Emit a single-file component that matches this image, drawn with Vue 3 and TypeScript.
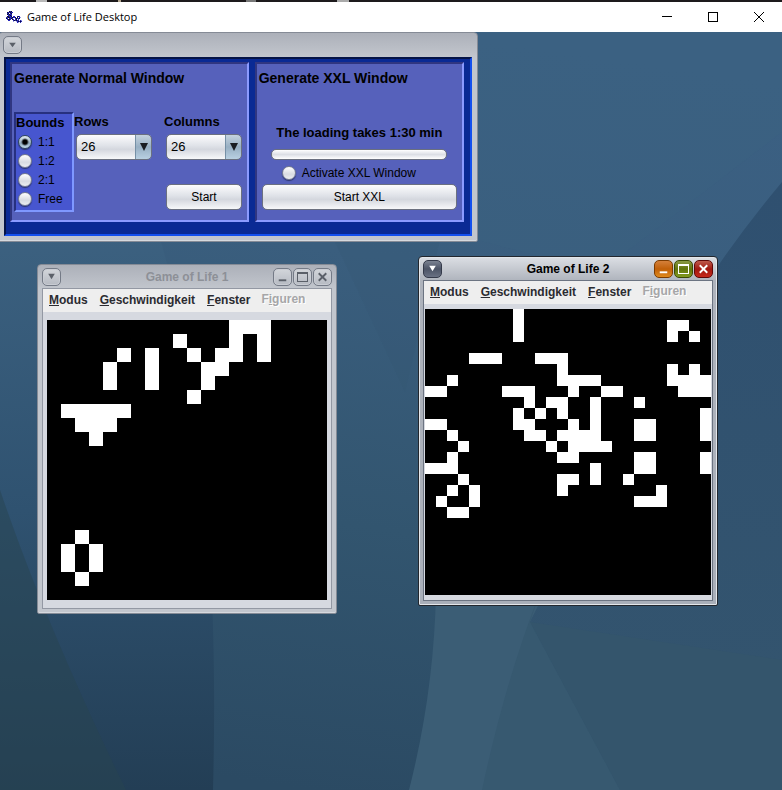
<script setup lang="ts">
import { ref } from 'vue'

interface LifeWindow {
  id: string
  title: string
  active: boolean
  size: number
  cell: number
  rows: Record<number, number[]>
}

interface MenuEntry {
  key: string
  before: string
  after: string
  disabled: boolean
}

const bounds = ['1:1', '1:2', '2:1', 'Free']
const bound = ref('1:1')
const rows = ref(26)
const columns = ref(26)
const sizes = [10, 20, 26, 30, 40]
const xxl = ref(false)

const menus: MenuEntry[] = [
  { key: 'M', before: '', after: 'odus', disabled: false },
  { key: 'G', before: '', after: 'eschwindigkeit', disabled: false },
  { key: 'F', before: '', after: 'enster', disabled: false },
  { key: 'i', before: 'F', after: 'guren', disabled: true },
]

const windows: LifeWindow[] = [
  {
    id: 'one',
    title: 'Game of Life 1',
    active: false,
    size: 20,
    cell: 14,
    rows: {
      0: [13, 14, 15],
      1: [9, 13, 15],
      2: [5, 7, 10, 12, 13, 15],
      3: [4, 7, 11, 12],
      4: [4, 7, 11],
      5: [10],
      6: [1, 2, 3, 4, 5],
      7: [2, 3, 4],
      8: [3],
      15: [2],
      16: [1, 3],
      17: [1, 3],
      18: [2],
    },
  },
  {
    id: 'two',
    title: 'Game of Life 2',
    active: true,
    size: 26,
    cell: 11,
    rows: {
      0: [8],
      1: [8, 22, 23],
      2: [8, 22, 24],
      4: [4, 5, 6, 10, 11, 12],
      5: [12, 22, 24],
      6: [2, 12, 13, 14, 15, 22, 23, 24, 25],
      7: [0, 1, 7, 8, 9, 13, 16, 17, 23, 24, 25],
      8: [9, 11, 12, 15, 19],
      9: [8, 10, 12, 15, 25],
      10: [0, 1, 8, 9, 13, 15, 19, 20, 25],
      11: [2, 9, 10, 12, 13, 14, 15, 19, 20, 25],
      12: [3, 11, 13, 14, 15, 16],
      13: [2, 12, 13, 19, 20, 25],
      14: [0, 1, 2, 15, 19, 20, 25],
      15: [3, 12, 13, 15, 18],
      16: [2, 4, 12, 21],
      17: [1, 4, 19, 20, 21],
      18: [2, 3],
    },
  },
]

function cells(w: LifeWindow): { x: number; y: number }[] {
  return Object.entries(w.rows).flatMap(([y, xs]) => xs.map((x) => ({ x, y: Number(y) })))
}

// Pixel pattern of the application icon: k = black, b = blue, l = light blue
const iconPattern = [
  '...kbk..........',
  '.kbbkbb.........',
  '.bk.bk..........',
  '.kbkbb..........',
  '..bbkb..........',
  '.kkbbk.bb..bkb..',
  'bbkkbbkbbk.k.bl.',
  'kb.bbkb..bkbbk..',
  '.bkkb.kb.bk.b...',
  '..bb...bkbkbb.bl',
  '.......l..lbkbkb',
  '...........bl.b.',
]
const iconColors: Record<string, string> = { k: '#101030', b: '#2424b8', l: '#9a9ae0' }
const iconPixels = iconPattern.flatMap((line, y) =>
  [...line].map((c, x) => ({ x, y, c })).filter((p) => p.c !== '.'),
)
</script>

<template>
  <div class="screen">
    <div class="strip"></div>
    <header class="os-bar">
      <svg class="app-icon" viewBox="0 0 16 12" shape-rendering="crispEdges" aria-hidden="true">
        <rect v-for="(p, i) in iconPixels" :key="i" :x="p.x" :y="p.y" width="1" height="1" :fill="iconColors[p.c]" />
      </svg>
      <h1>Game of Life Desktop</h1>
      <div class="os-buttons">
        <button type="button" aria-label="Minimize">
          <svg viewBox="0 0 10 10" shape-rendering="crispEdges"><path d="M0 4.5H10" /></svg>
        </button>
        <button type="button" aria-label="Maximize">
          <svg viewBox="0 0 10 10" shape-rendering="crispEdges"><path d="M.5 .5H9.5V9.5H.5Z" /></svg>
        </button>
        <button type="button" aria-label="Close">
          <svg viewBox="0 0 10 10"><path d="M0 0L10 10M10 0L0 10" /></svg>
        </button>
      </div>
    </header>

    <main class="desktop">
      <svg class="wallpaper" viewBox="0 0 782 758" preserveAspectRatio="xMidYMid slice" aria-hidden="true">
        <defs>
          <linearGradient id="sky" x1="0.55" y1="0" x2="0.4" y2="1">
            <stop offset="0" stop-color="#3b6083" />
            <stop offset="0.3" stop-color="#3a5e7e" />
            <stop offset="0.65" stop-color="#32556f" />
            <stop offset="1" stop-color="#2b4a63" />
          </linearGradient>
          <linearGradient id="deep" x1="0" y1="0" x2="0" y2="1">
            <stop offset="0" stop-color="#3c6180" />
            <stop offset="0.5" stop-color="#2f5270" />
            <stop offset="1" stop-color="#233e55" />
          </linearGradient>
          <linearGradient id="right" x1="0" y1="0" x2="0" y2="1">
            <stop offset="0" stop-color="#2f5070" />
            <stop offset="1" stop-color="#34556e" />
          </linearGradient>
        </defs>
        <rect width="782" height="758" fill="url(#sky)" />
        <path d="M0 200H158Q222 410 213 758H0Z" fill="url(#deep)" />
        <path d="M0 458Q46 594 126 758H0Z" fill="#274450" fill-opacity=".5" />
        <path d="M334 208L405 360L440 208Z" fill="#31536f" fill-opacity=".12" />
        <path d="M782 150Q690 260 640 370L530 590L620 758H782Z" fill="url(#right)" />
        <path d="M436 560Q434 660 409 758H620L530 590L545 560Z" fill="#3b5d75" />
        <path d="M540 560Q505 650 482 758H620L530 590Z" fill="#375970" />
        <path d="M530 590L782 628V758H620Z" fill="#34556c" />
        <path d="M478 208L600 240L782 100V0H478Z" fill="#3d6282" fill-opacity=".3" />
      </svg>

      <section class="frame frame-main" aria-label="Generator">
        <div class="frame-title">
          <button type="button" class="knob" aria-label="Window menu">
            <svg viewBox="0 0 17 17"><path class="solid" d="M5 6H12L8.5 11Z" /></svg>
          </button>
        </div>
        <div class="generator">
          <section class="panel panel-normal">
            <h2>Generate Normal Window</h2>
            <div class="normal-form">
              <fieldset class="bounds">
                <legend>Bounds</legend>
                <label v-for="b in bounds" :key="b">
                  <input v-model="bound" type="radio" name="bounds" :value="b" />
                  <span>{{ b }}</span>
                </label>
              </fieldset>
              <div class="field">
                <label for="rows">Rows</label>
                <div class="combo">
                  <select id="rows" v-model="rows">
                    <option v-for="s in sizes" :key="s" :value="s">{{ s }}</option>
                  </select>
                  <svg viewBox="0 0 8 8" aria-hidden="true"><path d="M0 0H8L4 8Z" /></svg>
                </div>
              </div>
              <div class="field">
                <label for="columns">Columns</label>
                <div class="combo">
                  <select id="columns" v-model="columns">
                    <option v-for="s in sizes" :key="s" :value="s">{{ s }}</option>
                  </select>
                  <svg viewBox="0 0 8 8" aria-hidden="true"><path d="M0 0H8L4 8Z" /></svg>
                </div>
                <button type="button" class="push">Start</button>
              </div>
            </div>
          </section>
          <section class="panel panel-xxl">
            <h2>Generate XXL Window</h2>
            <div class="xxl-form">
              <strong>The loading takes 1:30 min</strong>
              <div class="progress" role="progressbar" aria-label="Loading" aria-valuenow="0"></div>
              <label class="activate">
                <input v-model="xxl" type="checkbox" />
                <span>Activate XXL Window</span>
              </label>
              <button type="button" class="push">Start XXL</button>
            </div>
          </section>
        </div>
      </section>

      <section
        v-for="w in windows"
        :key="w.id"
        class="frame"
        :class="[`frame-${w.id}`, { active: w.active }]"
        :aria-label="w.title"
      >
        <div class="frame-title">
          <button type="button" class="knob" aria-label="Window menu">
            <svg viewBox="0 0 17 17"><path class="solid" d="M5 5H12L8.5 11Z" /></svg>
          </button>
          <h2>{{ w.title }}</h2>
          <div class="knobs">
            <button type="button" class="knob min" aria-label="Minimize">
              <svg viewBox="0 0 17 17"><path d="M4.5 12H12.5" /></svg>
            </button>
            <button type="button" class="knob max" aria-label="Maximize">
              <svg viewBox="0 0 17 16" shape-rendering="crispEdges">
                <path class="thin" d="M3.5 3.5H13.5V12.5H3.5ZM3 4.5H14" />
              </svg>
            </button>
            <button type="button" class="knob close" aria-label="Close">
              <svg viewBox="0 0 17 17"><path d="M4.500 4.500L12.500 12.500M12.500 4.500L4.500 12.500" /></svg>
            </button>
          </div>
        </div>
        <div class="frame-body">
          <nav class="menubar" :aria-label="`${w.title} menu`">
            <button v-for="m in menus" :key="m.key + m.after" type="button" :disabled="m.disabled">
              {{ m.before }}<u>{{ m.key }}</u>{{ m.after }}
            </button>
          </nav>
          <div class="board">
            <svg
              :viewBox="`0 0 ${w.size} ${w.size}`"
              :width="w.size * w.cell"
              :height="w.size * w.cell"
              shape-rendering="crispEdges"
              role="img"
              :aria-label="`${w.title} board`"
            >
              <rect :width="w.size" :height="w.size" fill="#000" />
              <rect v-for="c in cells(w)" :key="`${c.x}-${c.y}`" :x="c.x" :y="c.y" width="1" height="1" fill="#fff" />
            </svg>
          </div>
        </div>
      </section>
    </main>
  </div>
</template>

<style>
body {
  margin: 0;
}
</style>

<style scoped>
.screen {
  display: flex;
  flex-direction: column;
  min-height: 100vh;
  overflow: hidden;
  font: 12px/16px 'Liberation Sans', Arial, sans-serif;
  color: #000;
}

.screen * {
  box-sizing: border-box;
}

button,
select {
  margin: 0;
  padding: 0;
  font: inherit;
  color: inherit;
}

h1,
h2 {
  margin: 0;
}

.strip {
  height: 2px;
  background: linear-gradient(90deg, #1d1a1c 36px, #b8b8b8 36px 47px, #1d1a1c 47px 118px, #b5a890 118px 121px, #1d1a1c 121px 246px, #777 246px 256px, #1d1a1c 256px 337px, #aaa 337px 349px, #1d1a1c 349px);
}

.os-bar {
  display: flex;
  align-items: center;
  height: 30px;
  padding-left: 6px;
  background: #fff;
}

.app-icon {
  width: 16px;
  height: 12px;
  margin-right: 5px;
}

.os-bar h1 {
  font: 11px/16px 'Open Sans', 'Noto Sans', sans-serif;
}

.os-buttons {
  display: flex;
  margin-left: auto;
}

.os-buttons button {
  display: flex;
  align-items: center;
  justify-content: center;
  width: 46px;
  height: 28px;
  border: 0;
  background: none;
}

.os-buttons svg {
  width: 10px;
  height: 10px;
  overflow: visible;
  fill: none;
  stroke: #000;
}

.desktop {
  position: relative;
  flex: 1;
  overflow: hidden;
  background: #34556f;
}

.wallpaper {
  position: absolute;
  inset: 0;
  width: 100%;
  height: 100%;
}

/* Internal frames, placed freely on the desktop */
.frame {
  position: absolute;
  display: flex;
  flex-direction: column;
  padding: 0 4px 4px;
  border: 1px solid #858b96;
  border-radius: 4px 4px 2px 2px;
  background: linear-gradient(#acb0b9, #c2c6cd 24px, #c2c6cd);
  box-shadow: inset 0 -1px #d6d9de;
}

.frame-main {
  top: 0;
  left: -2px;
  width: 480px;
}

.frame-one {
  top: 232px;
  left: 37px;
  width: 300px;
  height: 350px;
}

.frame-two {
  top: 224px;
  left: 418px;
  width: 300px;
  height: 350px;
}

.frame.active {
  border-color: #22272e;
  background: linear-gradient(#dcdfe4, #aeb3bc 24px, #a9afb9);
  box-shadow: inset 0 0 0 1px #e3e6ea;
}

.frame-title {
  display: grid;
  grid-template-columns: 60px 1fr 60px;
  align-items: center;
  height: 23px;
}

.frame-title h2 {
  font-size: 12px;
  line-height: 16px;
  text-align: center;
  color: #8d9097;
}

.active .frame-title h2 {
  color: #000;
}

.knobs {
  display: flex;
  justify-content: flex-end;
  gap: 1px;
}

.knob {
  width: 19px;
  height: 18px;
  border: 1px solid #747a86;
  border-radius: 5px;
  background: linear-gradient(#d3d6db, #b6bac2);
  box-shadow: inset 0 0 0 1px #c9ccd3;
  color: #5b6069;
}

.knob svg {
  display: block;
  width: 17px;
  height: 16px;
  fill: none;
  stroke: currentColor;
  stroke-width: 2;
}

.knob .solid {
  fill: currentColor;
  stroke: none;
}

.knob .thin {
  stroke-width: 1;
}

.active .knob {
  border-color: #343a4a;
  background: linear-gradient(#7b8291, #4c5466 50%, #697183);
  box-shadow: none;
  color: #fff;
}

.active .knob.min {
  border-color: #7c3c00;
  background: linear-gradient(#d4803a, #c06009 50%, #e08a1c);
}

.active .knob.max {
  border-color: #3b4a05;
  background: linear-gradient(#8b9a45, #60740c 50%, #839b1f);
}

.active .knob.close {
  border-color: #5e0808;
  background: linear-gradient(#bf5a4c, #a01810 50%, #c6281b);
}

.frame-body {
  display: flex;
  flex: 1;
  flex-direction: column;
  border: 1px solid #9398a3;
  background: #d6d9e0;
}

.active .frame-body {
  border-color: #6c7482;
}

.menubar {
  display: flex;
  height: 23px;
  background: #eee;
}

.menubar button {
  height: 22px;
  padding: 0 6px;
  border: 0;
  background: none;
  font-weight: bold;
  color: #2b2b30;
}

.menubar button:disabled {
  height: 20px;
  padding: 0 5px;
  color: #a6a6a8;
  text-shadow: 1px 1px #fff;
}

.board {
  display: flex;
  flex: 1;
  align-items: center;
  justify-content: center;
}

.board svg {
  display: block;
}

/* Generator controls */
.generator {
  display: flex;
  gap: 6px;
  margin: 1px;
  padding: 3px 6px 12px 4px;
  border: 2px solid;
  border-color: #051447 #1450ee #1450ee #051447;
  background: #0a2a94;
}

.panel {
  display: flex;
  flex-direction: column;
  min-width: 0;
  border: 2px solid;
  border-color: #303681 #8b9bff #8b9bff #303681;
  background: #5661bb;
}

.panel-normal {
  flex: 240;
}

.panel-xxl {
  flex: 210;
}

.panel h2 {
  padding: 6px 2px 4px;
  font-size: 14px;
  line-height: 16px;
}

.normal-form {
  display: grid;
  grid-template-columns: 60px 90px 1fr;
  flex: 1;
  padding: 22px 0 8px 2px;
}

.bounds {
  display: flex;
  flex-direction: column;
  min-width: 0;
  margin: 0;
  padding: 0 0 2px;
  border: 2px solid;
  border-color: #273080 #7f98ff #7f98ff #273080;
  background: #4756cf;
}

.bounds legend {
  float: left;
  padding: 0;
  font-size: 13px;
  font-weight: bold;
  line-height: 18px;
}

.bounds label {
  display: flex;
  align-items: center;
  gap: 6px;
  height: 19px;
  padding-left: 2px;
}

.bounds input,
.activate input {
  width: 14px;
  height: 14px;
  margin: 0;
  border: 1px solid #777d90;
  border-radius: 50%;
  appearance: none;
  background: linear-gradient(#fff, #d8dbe2 60%, #eceef2);
  box-shadow: 0 1px 1px #2c346e;
}

.bounds input:checked {
  border-color: #31475e;
  background: radial-gradient(circle, #000 2px, transparent 4px), linear-gradient(#e6edf3, #8fa9bd 60%, #c3dbea);
}

.field {
  display: flex;
  flex-direction: column;
  align-items: flex-start;
}

.field label {
  font-size: 13px;
  font-weight: bold;
  line-height: 20px;
}

.combo {
  position: relative;
  margin: 2px 0 24px 2px;
}

.combo select,
.push {
  display: block;
  width: 76px;
  height: 26px;
  border: 1px solid #6b7080;
  border-radius: 5px;
  background: linear-gradient(#fcfcfd, #dfe2e8 45%, #d4d7de 60%, #f7f8fa);
}

.combo select {
  padding-left: 4px;
  font-size: 13px;
  appearance: none;
  background:
    linear-gradient(90deg, #7590a6 1px, transparent 1px) right / 16px 100% no-repeat,
    linear-gradient(#c5d3df, #97afc3 50%, #b9d0e2) right / 16px 100% no-repeat,
    linear-gradient(#fcfcfd, #dfe2e8 45%, #d4d7de 60%, #f7f8fa);
}

.combo svg {
  position: absolute;
  top: 9px;
  right: 4px;
  width: 8px;
  height: 8px;
  pointer-events: none;
  fill: #1a1d22;
}

.field .push {
  margin-left: 2px;
}

.xxl-form {
  display: flex;
  flex: 1;
  flex-direction: column;
  align-items: center;
  padding: 35px 5px 10px;
}

.xxl-form strong {
  font-size: 13px;
  line-height: 16px;
}

.progress {
  width: 176px;
  height: 11px;
  margin: 8px 0 4px;
  border: 1px solid #6b7080;
  border-radius: 5px;
  background: linear-gradient(#fff, #dcdfe5 50%, #fff);
}

.activate {
  display: flex;
  align-items: center;
  align-self: flex-start;
  gap: 6px;
  height: 17px;
  margin: 0 0 3px 20px;
}

.activate input:checked {
  background: radial-gradient(circle, #000 3px, #c3dbea 4px);
}

.xxl-form .push {
  width: 100%;
}
</style>
